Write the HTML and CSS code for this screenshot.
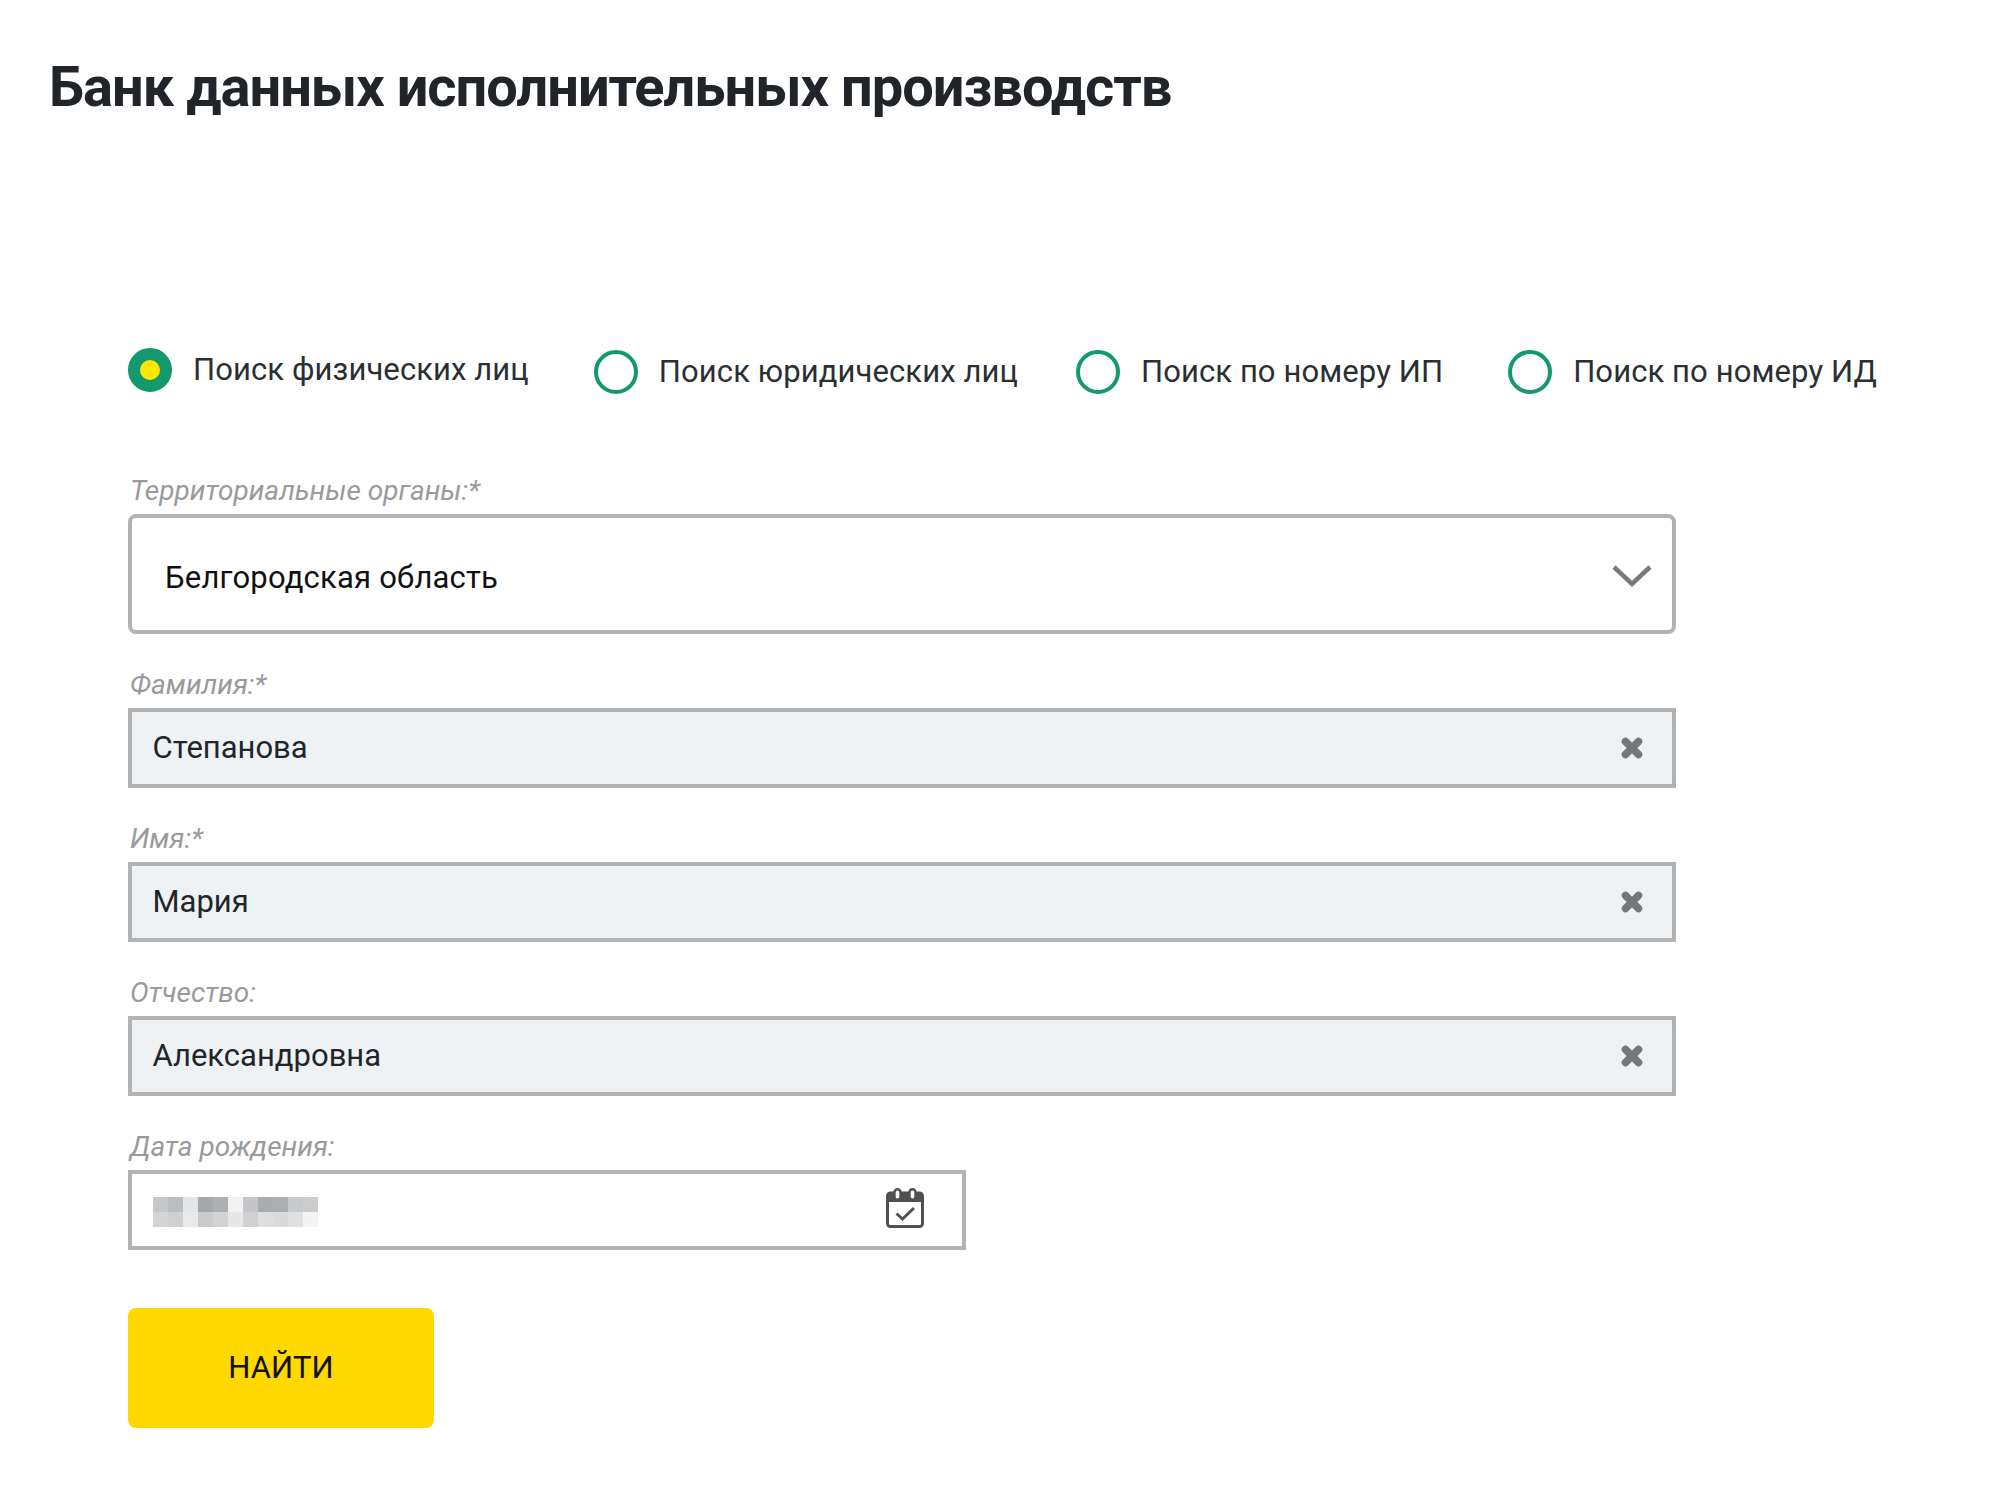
FILE: index.html
```html
<!DOCTYPE html>
<html lang="ru">
<head>
<meta charset="utf-8">
<title>Банк данных исполнительных производств</title>
<link rel="stylesheet" href="styles.css">
</head>
<body>
<h1 class="title">Банк данных исполнительных производств</h1>
<main class="content">
  <div class="radios">
    <label class="radio radio-first"><span class="dot dot-on"></span><span>Поиск физических лиц</span></label>
    <label class="radio"><span class="dot"></span><span>Поиск юридических лиц</span></label>
    <label class="radio"><span class="dot"></span><span>Поиск по номеру ИП</span></label>
    <label class="radio"><span class="dot"></span><span>Поиск по номеру ИД</span></label>
  </div>
  <form class="form">
    <div class="field field-select">
      <div class="label">Территориальные органы:*</div>
      <div class="select">
        <span class="select-text">Белгородская область</span>
        <svg class="chevron" width="40" height="24" viewBox="0 0 40 24"><path d="M2 3 L20 20 L38 3" fill="none" stroke="#7a7a7a" stroke-width="4.500"/></svg>
      </div>
    </div>
    <div class="field">
      <div class="label">Фамилия:*</div>
      <div class="input filled"><span class="value">Степанова</span><svg class="clear" width="22" height="22" viewBox="0 0 22 22"><path d="M4.500 4.500 L17.500 17.500 M17.500 4.500 L4.500 17.500" stroke="#74787b" stroke-width="7.500" stroke-linecap="round"/></svg></div>
    </div>
    <div class="field">
      <div class="label">Имя:*</div>
      <div class="input filled"><span class="value">Мария</span><svg class="clear" width="22" height="22" viewBox="0 0 22 22"><path d="M4.500 4.500 L17.500 17.500 M17.500 4.500 L4.500 17.500" stroke="#74787b" stroke-width="7.500" stroke-linecap="round"/></svg></div>
    </div>
    <div class="field">
      <div class="label">Отчество:</div>
      <div class="input filled"><span class="value">Александровна</span><svg class="clear" width="22" height="22" viewBox="0 0 22 22"><path d="M4.500 4.500 L17.500 17.500 M17.500 4.500 L4.500 17.500" stroke="#74787b" stroke-width="7.500" stroke-linecap="round"/></svg></div>
    </div>
    <div class="field">
      <div class="label">Дата рождения:</div>
      <div class="input date">
        <svg class="blur" width="165" height="30" viewBox="0 0 11 2" shape-rendering="crispEdges">
          <rect x="0" y="0" width="1" height="1" fill="#c6c7c9"/><rect x="1" y="0" width="1" height="1" fill="#bcbdbf"/><rect x="2" y="0" width="1" height="1" fill="#e4e5e6"/><rect x="3" y="0" width="1" height="1" fill="#a6a7a9"/><rect x="4" y="0" width="1" height="1" fill="#aeafb1"/><rect x="5" y="0" width="1" height="1" fill="#f2f2f3"/><rect x="6" y="0" width="1" height="1" fill="#c4c5c7"/><rect x="7" y="0" width="1" height="1" fill="#abacae"/><rect x="8" y="0" width="1" height="1" fill="#adaeb0"/><rect x="9" y="0" width="1" height="1" fill="#c8c9cb"/><rect x="10" y="0" width="1" height="1" fill="#cbcccd"/>
          <rect x="0" y="1" width="1" height="1" fill="#d3d4d6"/><rect x="1" y="1" width="1" height="1" fill="#cfd0d2"/><rect x="2" y="1" width="1" height="1" fill="#e8e9ea"/><rect x="3" y="1" width="1" height="1" fill="#c9cacc"/><rect x="4" y="1" width="1" height="1" fill="#d2d3d5"/><rect x="5" y="1" width="1" height="1" fill="#e6e7e8"/><rect x="6" y="1" width="1" height="1" fill="#cfd0d2"/><rect x="7" y="1" width="1" height="1" fill="#dddee0"/><rect x="8" y="1" width="1" height="1" fill="#d9dadb"/><rect x="9" y="1" width="1" height="1" fill="#dfe0e1"/><rect x="10" y="1" width="1" height="1" fill="#f4f4f5"/>
        </svg>
        <svg class="calendar" width="38" height="40" viewBox="0 0 38 40">
          <rect x="1.500" y="5" width="35" height="33.500" rx="3" fill="none" stroke="#505050" stroke-width="3"/>
          <path d="M1.500 5 H36.500 V14 H1.500 Z" fill="#505050"/>
          <rect x="8.500" y="1.200" width="6" height="10.500" rx="3" fill="#fff" stroke="#505050" stroke-width="2.400"/>
          <rect x="23.500" y="1.200" width="6" height="10.500" rx="3" fill="#fff" stroke="#505050" stroke-width="2.400"/>
          <path d="M10.500 25.500 L16.500 31 L28 20" fill="none" stroke="#505050" stroke-width="3"/>
        </svg>
      </div>
    </div>
    <button class="submit" type="button">НАЙТИ</button>
  </form>
</main>
</body>
</html>
```

FILE: styles.css
```css
* { box-sizing: border-box; }
html, body { margin: 0; padding: 0; background: #fff; }
body {
  width: 2000px;
  height: 1504px;
  overflow: hidden;
  font-family: Roboto, "Liberation Sans", sans-serif;
  color: #212529;
}
.title {
  margin: 0;
  padding: 52px 0 0 49px;
  font-size: 56px;
  line-height: 70px;
  font-weight: 700;
  letter-spacing: -1px;
  color: #212529;
}
.content { padding: 226px 0 0 128px; }
.radios { display: flex; align-items: flex-start; height: 48px; }
.radio {
  display: flex;
  align-items: center;
  gap: 21px;
  margin-top: 2px;
  margin-right: 65px;
  font-size: 31px;
  line-height: 44px;
  letter-spacing: 0.1px;
  white-space: nowrap;
  color: #2a2f33;
}
.radio:nth-child(2) { margin-right: 58px; }
.radio-first { margin-top: 0; }
.dot {
  width: 44px;
  height: 44px;
  border-radius: 50%;
  border: 4px solid #14986d;
  background: #fff;
  flex: none;
}
.dot-on { border: 12px solid #14986d; background: #ffe600; }
.form { margin-top: 84px; width: 1548px; display: flex; flex-direction: column; }
.label {
  font-size: 28px;
  line-height: 22px;
  font-style: italic;
  color: #9a9a9a;
  height: 34px;
  padding-left: 2px;
}
.select {
  height: 120px;
  border: 4px solid #b3b3b3;
  border-radius: 8px;
  display: flex;
  align-items: center;
  justify-content: space-between;
  padding: 3px 20px 0 33px;
  font-size: 31px;
  letter-spacing: 0.2px;
  color: #111;
  margin-bottom: 40px;
}
.select-text { padding-top: 3px; }
.input {
  height: 80px;
  border: 4px solid #b3b3b3;
  display: flex;
  align-items: center;
  justify-content: space-between;
  padding: 0 20px 0 20.500px;
  font-size: 31px;
  color: #212529;
  margin-bottom: 40px;
}
.value { padding-bottom: 2px; }
.filled { background: #eef2f5; }
.date { width: 838px; padding-right: 38px; margin-bottom: 58px; }
.blur { margin: 4px 0 0 0.500px; }
.calendar { margin-bottom: 4px; }
.clear { margin-right: 9px; }
.submit {
  width: 306px;
  height: 120px;
  border: 0;
  border-radius: 8px;
  padding: 0 0 2px;
  background: #ffd800;
  font-family: inherit;
  font-size: 31px;
  color: #111;
}
```
